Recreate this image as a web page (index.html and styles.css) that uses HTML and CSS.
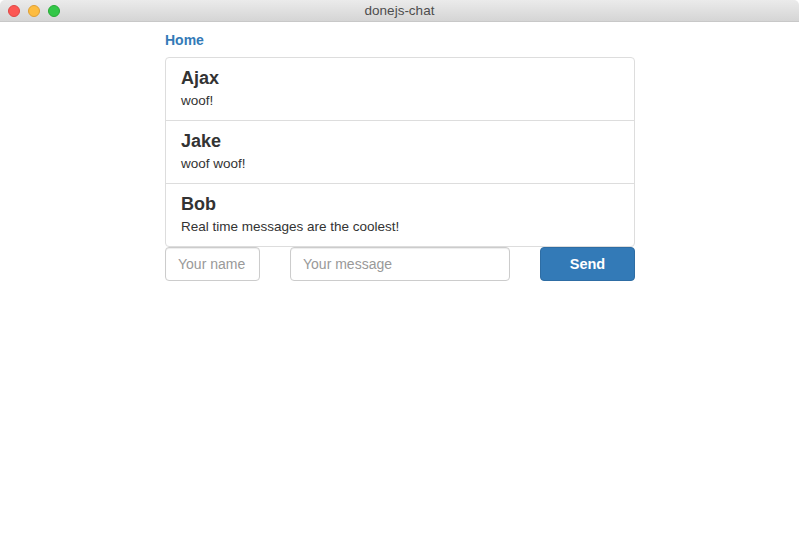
FILE: index.html
```html
<!DOCTYPE html>
<html>
<head>
<meta charset="utf-8">
<title>donejs-chat</title>
<link rel="stylesheet" href="styles.css">
</head>
<body>
<div class="window">
  <div class="titlebar">
    <div class="lights">
      <span class="light red"></span>
      <span class="light yellow"></span>
      <span class="light green"></span>
    </div>
    <div class="title">donejs-chat</div>
  </div>
  <div class="page">
    <div class="container">
      <a class="home" href="#">Home</a>
      <div class="list-group">
        <div class="list-group-item">
          <h4 class="item-heading">Ajax</h4>
          <p class="item-text">woof!</p>
        </div>
        <div class="list-group-item">
          <h4 class="item-heading">Jake</h4>
          <p class="item-text">woof woof!</p>
        </div>
        <div class="list-group-item">
          <h4 class="item-heading">Bob</h4>
          <p class="item-text">Real time messages are the coolest!</p>
        </div>
      </div>
      <form class="chat-form">
        <input class="form-control name" type="text" placeholder="Your name">
        <input class="form-control message" type="text" placeholder="Your message">
        <button class="btn" type="button">Send</button>
      </form>
    </div>
  </div>
</div>
</body>
</html>
```
FILE: styles.css
```css
* { box-sizing: border-box; }
html, body { margin: 0; padding: 0; background: #fff; }
body {
  font-family: "Liberation Sans", Arial, sans-serif;
  font-size: 14px;
  color: #333;
  width: 799px;
  height: 556px;
  overflow: hidden;
}
.window { height: 556px; display: flex; flex-direction: column; }
.titlebar {
  height: 22px;
  flex: none;
  position: relative;
  background: linear-gradient(#ebebeb, #d5d5d5);
  border-bottom: 1px solid #c8c8c8;
  border-radius: 5px 5px 0 0;
  display: flex;
  align-items: center;
  justify-content: center;
}
.lights {
  position: absolute;
  left: 8px;
  top: 5px;
  display: flex;
  gap: 8px;
}
.light {
  width: 12px;
  height: 12px;
  border-radius: 50%;
  display: block;
}
.red { background: #fc5753; border: 1px solid #df4744; }
.yellow { background: #fdbc40; border: 1px solid #de9f34; }
.green { background: #33c748; border: 1px solid #27aa35; }
.title {
  font-size: 13.5px;
  color: #4d4d4d;
  line-height: 22px;
}
.page { flex: 1; }
.container {
  width: 470px;
  margin-left: 165px;
  padding-top: 8px;
}
.home {
  display: block;
  color: #337ab7;
  font-weight: bold;
  text-decoration: none;
  line-height: 20px;
  margin-bottom: 7px;
}
.list-group {
  border: 1px solid #ddd;
  border-radius: 4px;
}
.list-group-item {
  padding: 10px 15px 9px;
  border-top: 1px solid #ddd;
  height: 63px;
}
.list-group-item:first-child { border-top: 0; height: 62px; }
.item-heading {
  margin: 0 0 4px;
  font-size: 18px;
  line-height: 20px;
  font-weight: bold;
  color: #333;
}
.item-text {
  margin: 0;
  font-size: 13.5px;
  line-height: 18px;
}
.chat-form {
  display: flex;
  justify-content: space-between;
  margin-top: 0;
}
.form-control {
  height: 34px;
  padding: 6px 12px;
  font-family: inherit;
  font-size: 14px;
  color: #555;
  border: 1px solid #ccc;
  border-radius: 4px;
  box-shadow: inset 0 1px 1px rgba(0,0,0,0.075);
  background: #fff;
  outline: none;
}
.form-control::placeholder { color: #999; }
.name { width: 95px; }
.message { width: 220px; }
.btn {
  width: 95px;
  height: 34px;
  background: #337ab7;
  border: 1px solid #2e6da4;
  border-radius: 4px;
  color: #fff;
  font-family: inherit;
  font-size: 14.5px;
  font-weight: bold;
}
```
